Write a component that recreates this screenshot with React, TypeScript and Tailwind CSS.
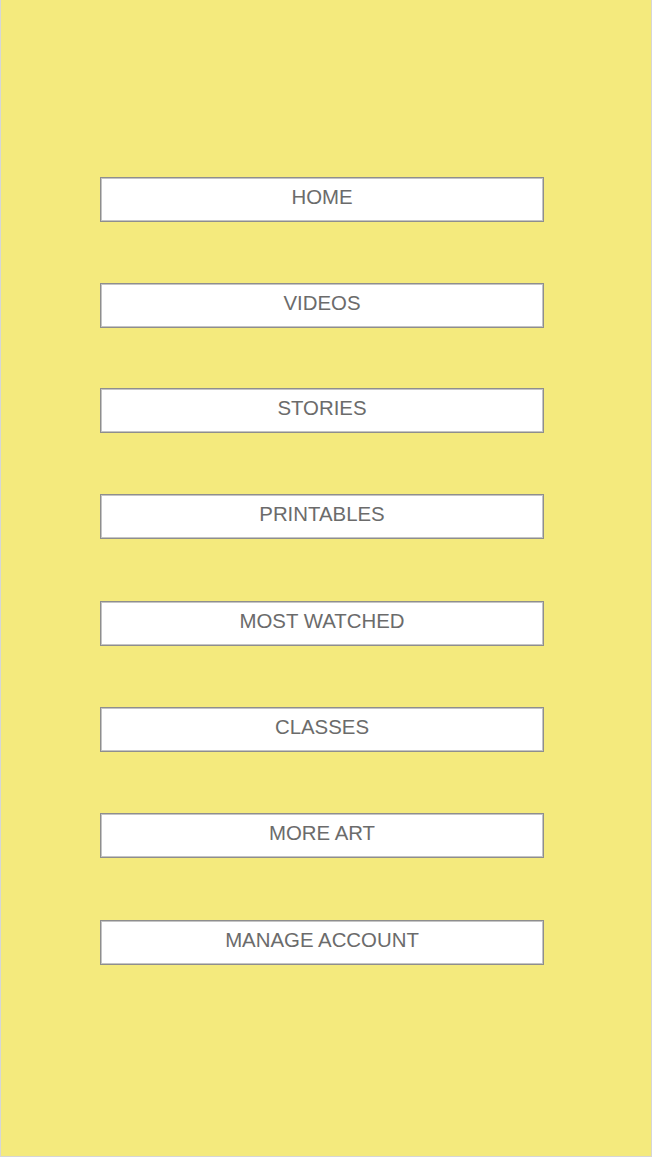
import React from 'react';

const items = [
    { label: 'HOME', gap: 'mt-0' },
    { label: 'VIDEOS', gap: 'mt-[61px]' },
    { label: 'STORIES', gap: 'mt-[60px]' },
    { label: 'PRINTABLES', gap: 'mt-[61px]' },
    { label: 'MOST WATCHED', gap: 'mt-[62px]' },
    { label: 'CLASSES', gap: 'mt-[61px]' },
    { label: 'MORE ART', gap: 'mt-[61px]' },
    { label: 'MANAGE ACCOUNT', gap: 'mt-[62px]' },
];

export default function App() {
    return (
        <div
            className="w-[652px] h-[1157px] bg-[#f4ea7d] border-l border-r border-b border-[#d6d6d6] pl-[99px] pt-[177px]"
            style={{ fontFamily: '"Liberation Sans", Arial, sans-serif' }}
        >
            <nav className="flex flex-col">
                {items.map((item) => (
                    <button
                        key={item.label}
                        className={`${item.gap} w-[444px] h-[45px] bg-white border border-[#8e8e8e] shadow-[inset_0_0_0_1px_#c4c4c4] flex justify-center items-start pt-[7px] text-[20.4px] leading-[24px] text-[#6b6b6b]`}
                    >
                        {item.label}
                    </button>
                ))}
            </nav>
        </div>
    );
}
